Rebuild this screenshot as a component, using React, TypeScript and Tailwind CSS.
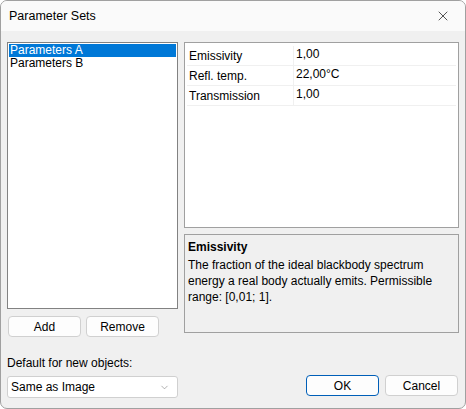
import { X, ChevronDown } from "lucide-react";

const font = { fontFamily: "'Liberation Sans', Arial, sans-serif" };

const rows = [
  { name: "Emissivity", value: "1,00" },
  { name: "Refl. temp.", value: "22,00°C" },
  { name: "Transmission", value: "1,00" },
];

const sets = ["Parameters A", "Parameters B"];

const App = () => {
  return (
    <div className="w-[466px] h-[409px] bg-white">
      <div className="w-[466px] h-[409px] flex flex-col border border-[#a0a0a0] rounded-[7px] overflow-hidden bg-[#f0f0f0] text-[12px] text-black" style={font}>
        {/* Title bar */}
        <div className="h-[30px] shrink-0 bg-[#fafafa] flex items-center justify-between pl-[8px] pr-[14px]">
          <span className="text-[12.5px]">Parameter Sets</span>
          <X className="w-[16px] h-[16px] text-[#333]" strokeWidth={1.25} />
        </div>

        {/* Body */}
        <div className="flex-1 flex pl-[6px] pr-[6px] pt-[11px] gap-[6px]">
          {/* Left column */}
          <div className="w-[171px] flex flex-col">
            <div className="h-[267px] bg-white border border-[#828282] p-[1px]">
              {sets.map((s, i) => (
                <div
                  key={s}
                  className={`h-[13px] leading-[13px] pl-[1px] ${i === 0 ? "bg-[#0078d7] text-white" : ""}`}
                >
                  {s}
                </div>
              ))}
            </div>
            <div className="flex gap-[5px] mt-[7px] pl-[1px]">
              <button className="w-[73px] h-[21px] bg-[#fdfdfd] border border-[#d0d0d0] rounded-[4px] text-[12px]">Add</button>
              <button className="w-[73px] h-[21px] bg-[#fdfdfd] border border-[#d0d0d0] rounded-[4px] text-[12px]">Remove</button>
            </div>
            <div className="mt-[19px] leading-[14px]">Default for new objects:</div>
            <div className="mt-[6px] h-[22px] bg-white border border-[#d0d0d0] rounded-[3px] flex items-center justify-between pl-[3px] pr-[7px]">
              <span>Same as Image</span>
              <ChevronDown className="w-[11px] h-[11px] text-[#777]" strokeWidth={1.25} />
            </div>
          </div>

          {/* Right column */}
          <div className="flex-1 flex flex-col">
            <div className="h-[186px] bg-white border border-[#a0a0a0] p-[2px] pt-[3px]">
              {rows.map((r) => (
                <div key={r.name} className="flex h-[20px] border-b border-[#f0f0f0]">
                  <div className="w-[107px] pl-[2px] leading-[20px] border-r border-[#f0f0f0]">{r.name}</div>
                  <div className="flex-1 pl-[2px] leading-[16px]">{r.value}</div>
                </div>
              ))}
            </div>
            <div className="mt-[6px] h-[99px] border border-[#a0a0a0] px-[3px] pt-[4px] leading-[16px]">
              <div className="font-bold mb-[2px]">Emissivity</div>
              <div>The fraction of the ideal blackbody spectrum energy a real body actually emits. Permissible range: [0,01; 1].</div>
            </div>
            <div className="flex justify-end gap-[6px] mt-[42px] pr-[1px]">
              <button className="w-[73px] h-[21px] bg-[#fdfdfd] border border-[#005fb8] rounded-[4px] text-[12px]">OK</button>
              <button className="w-[73px] h-[21px] bg-[#fdfdfd] border border-[#d0d0d0] rounded-[4px] text-[12px]">Cancel</button>
            </div>
          </div>
        </div>
      </div>
    </div>
  );
};

export default App;
